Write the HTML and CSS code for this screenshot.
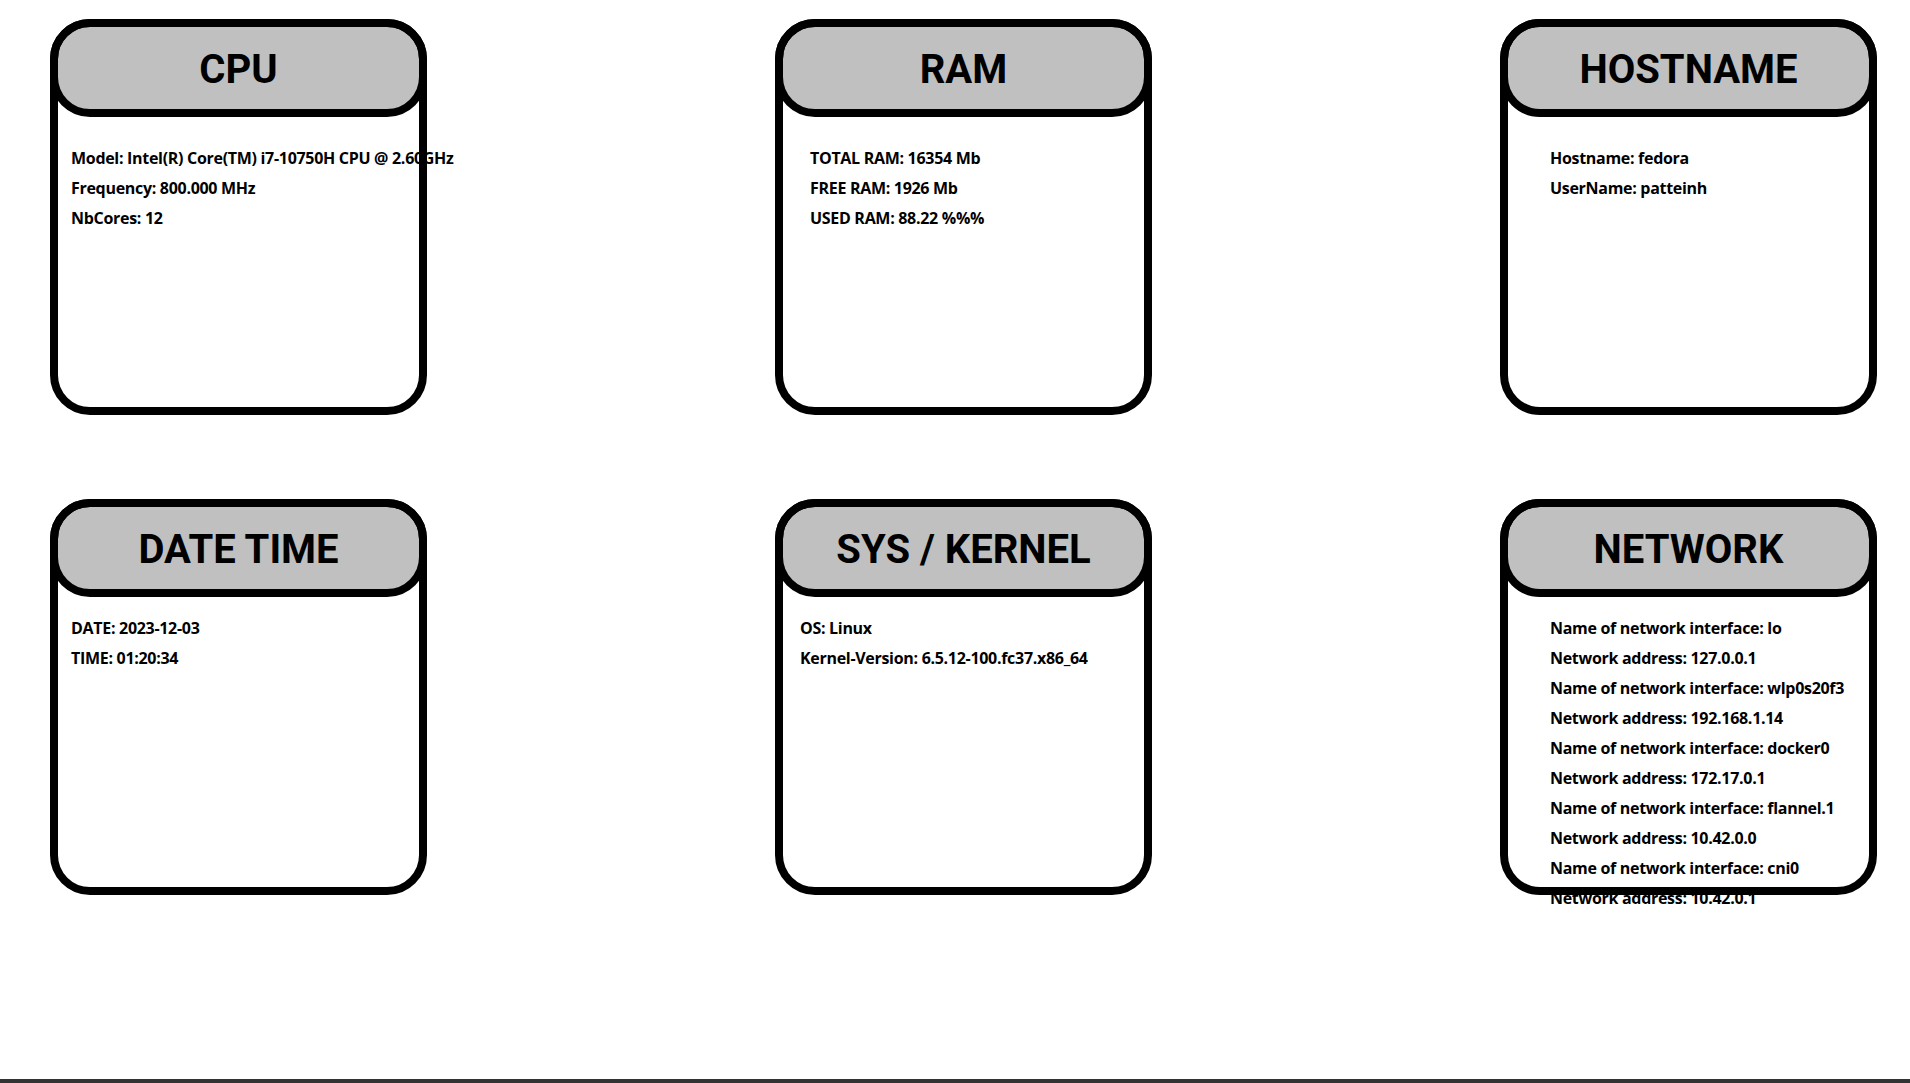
FILE: index.html
```html
<!doctype html>
<html lang="en">
  <head>
    <meta charset="UTF-8" />
    <meta name="viewport" content="width=device-width, initial-scale=1.0" />
    <title>System Monitor</title>
    <link rel="stylesheet" href="styles.css">
  </head>
  <body>
    <main class="dashboard">
      <!-- ligne 1 -->
      <section class="card card-cpu">
        <div class="card-header">CPU</div>
        <div class="card-body">
          <p>Model: Intel(R) Core(TM) i7-10750H CPU @ 2.60GHz</p>
          <p>Frequency: 800.000 MHz</p>
          <p>NbCores: 12</p>
        </div>
      </section>

      <section class="card card-ram">
        <div class="card-header">RAM</div>
        <div class="card-body">
          <p>TOTAL RAM: 16354 Mb</p>
          <p>FREE RAM: 1926 Mb</p>
          <p>USED RAM: 88.22 %%%</p>
        </div>
      </section>

      <section class="card card-host">
        <div class="card-header">HOSTNAME</div>
        <div class="card-body">
          <p>Hostname: fedora</p>
          <p>UserName: patteinh</p>
        </div>
      </section>

      <!-- ligne 2 -->
      <section class="card card-date">
        <div class="card-header">DATE TIME</div>
        <div class="card-body">
          <p>DATE: 2023-12-03</p>
          <p>TIME: 01:20:34</p>
        </div>
      </section>

      <section class="card card-sys">
        <div class="card-header">SYS / KERNEL</div>
        <div class="card-body">
          <p>OS: Linux</p>
          <p>Kernel-Version: 6.5.12-100.fc37.x86_64</p>
        </div>
      </section>

      <section class="card card-network">
        <div class="card-header">NETWORK</div>
        <div class="card-body">
          <p>Name of network interface: lo</p>
          <p>Network address: 127.0.0.1</p>
          <p>Name of network interface: wlp0s20f3</p>
          <p>Network address: 192.168.1.14</p>
          <p>Name of network interface: docker0</p>
          <p>Network address: 172.17.0.1</p>
          <p>Name of network interface: flannel.1</p>
          <p>Network address: 10.42.0.0</p>
          <p>Name of network interface: cni0</p>
          <p>Network address: 10.42.0.1</p>
        </div>
      </section>
    </main>

    <footer class="footer"></footer>
  </body>
</html>
```

FILE: styles.css
```css
body {
  margin: 0;
  padding: 0;
  background: #ffffff;
  color: #000000;
  font-family: 'Open Sans', 'Noto Sans', sans-serif;
}

.dashboard {
  display: grid;
  grid-template-columns: repeat(3, 377px);
  grid-auto-rows: 396px;
  justify-content: space-between;
  row-gap: 84px;
  padding: 19px 33px 184px 50px;
}

.card {
  position: relative;
  height: 396px;
  box-sizing: border-box;
}

/* la bordure passe par-dessus le texte qui déborde */
.card::after {
  content: '';
  position: absolute;
  top: 0;
  left: 0;
  right: 0;
  bottom: 0;
  border: 8px solid #000000;
  border-radius: 40px;
  pointer-events: none;
}

.card-header {
  height: 98px;
  box-sizing: border-box;
  display: flex;
  align-items: center;
  justify-content: center;
  padding-top: 2px;
  background: #c0c0c0;
  border: 8px solid #000000;
  border-radius: 40px;
  font-family: 'Roboto', 'Liberation Sans', sans-serif;
  font-size: 40px;
  font-weight: 700;
}

.card-body {
  padding: 26px 0 0 21px;
  font-size: 16px;
  font-weight: 700;
  letter-spacing: -0.3px;
  line-height: 30px;
  white-space: nowrap;
}

.card-body p {
  margin: 0;
}

.card-ram .card-body {
  padding-left: 35px;
}

.card-host .card-body,
.card-network .card-body {
  padding-left: 50px;
}

.card-date .card-body,
.card-sys .card-body,
.card-network .card-body {
  padding-top: 16px;
}

.card-sys .card-body {
  padding-left: 25px;
}

.footer {
  height: 60px;
  background: #333333;
}
```
